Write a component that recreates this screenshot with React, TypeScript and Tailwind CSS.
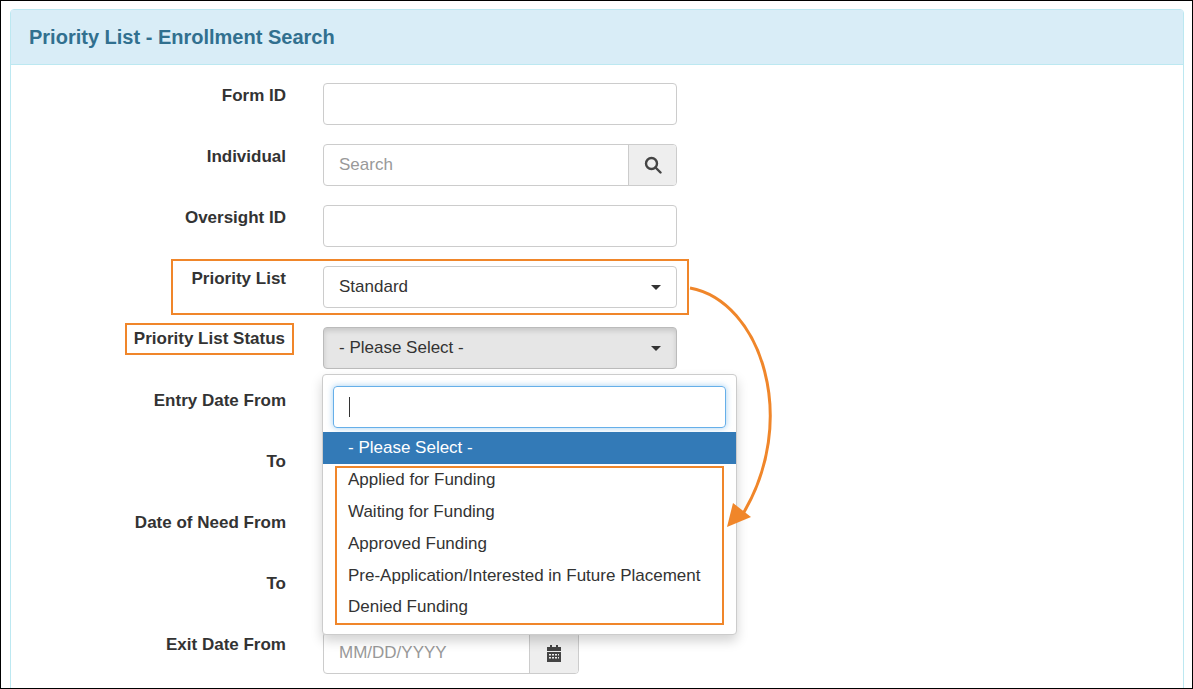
import React from "react";

const Cal = () => (
  <svg width="16" height="17" viewBox="0 0 16 17" fill="#444">
    <rect x="4" y="0" width="2" height="3" />
    <rect x="10" y="0" width="2" height="3" />
    <rect x="1" y="2" width="14" height="4" />
    <path d="M1 7h14v10H1z M3 9v1.5h2V9z M6 9v1.5h2V9z M9 9v1.5h2V9z M12 9v1.5h1V9z M3 12v1.5h2V12z M6 12v1.5h2V12z M9 12v1.5h2V12z M12 12v1.5h1V12z" fillRule="evenodd" />
  </svg>
);

const Caret = () => <span className="w-0 h-0 border-l-[5px] border-r-[5px] border-t-[5px] border-l-transparent border-r-transparent border-t-[#333]" />;

function Row({ label, children, boxed }: { label: string; children: React.ReactNode; boxed?: boolean }) {
  return (
    <div className="flex items-start h-[61px]">
      <div className="w-[275px] flex justify-end pt-[2px]">
        <span className={"text-[17px] font-bold text-[#333] leading-[22px] " + (boxed ? "border-2 border-[#f0862a] px-[7px] -mt-[6px] py-[3px] -mr-[8px]" : "")}>{label}</span>
      </div>
      <div className="ml-[37px]">{children}</div>
    </div>
  );
}

const DateInput = () => (
  <div className="flex w-[256px] h-[42px] border border-[#ccc] rounded-[4px] overflow-hidden">
    <div className="flex-1 px-[15px] flex items-center text-[17px] text-[#999]">MM/DD/YYYY</div>
    <div className="w-[49px] bg-[#eee] border-l border-[#ccc] flex items-center justify-center"><Cal /></div>
  </div>
);

export default function App() {
  return (
    <div className="w-[1193px] h-[689px] bg-white border border-black relative overflow-hidden" style={{ fontFamily: '"Liberation Sans", Arial, sans-serif' }}>
      <div className="ml-[9px] mt-[8px] w-[1174px] h-[700px] border border-[#bce8f1] rounded-[4px]">
        <div className="h-[55px] bg-[#d9edf7] border-b border-[#bce8f1] flex items-center px-[18px]">
          <span className="text-[20px] font-bold text-[#31708f]">Priority List - Enrollment Search</span>
        </div>
        <div className="pt-[18px]">
          <Row label="Form ID"><div className="w-[354px] h-[42px] border border-[#ccc] rounded-[4px]" /></Row>
          <Row label="Individual">
            <div className="flex w-[354px] h-[42px] border border-[#ccc] rounded-[4px] overflow-hidden">
              <div className="flex-1 px-[15px] flex items-center text-[17px] text-[#999]">Search</div>
              <div className="w-[48px] bg-[#eee] border-l border-[#ccc] flex items-center justify-center">
                <svg width="18" height="18" viewBox="0 0 18 18" fill="none" stroke="#444" strokeWidth="2.4"><circle cx="7.5" cy="7.5" r="5.5" /><path d="M11.5 11.5l5 5" strokeLinecap="round" /></svg>
              </div>
            </div>
          </Row>
          <Row label="Oversight ID"><div className="w-[354px] h-[42px] border border-[#ccc] rounded-[4px]" /></Row>
          <div className="relative">
            <div className="absolute left-[160px] -top-[7px] w-[518px] h-[56px] border-2 border-[#f0862a] pointer-events-none" />
            <Row label="Priority List">
              <div className="w-[354px] h-[42px] border border-[#ccc] rounded-[4px] flex items-center justify-between px-[15px] text-[17px] text-[#333]">Standard<Caret /></div>
            </Row>
          </div>
          <Row label="Priority List Status" boxed>
            <div className="w-[354px] h-[42px] border border-[#bbb] rounded-[4px] bg-[#e6e6e6] shadow-[inset_0_3px_5px_rgba(0,0,0,0.125)] flex items-center justify-between px-[15px] text-[17px] text-[#333]">- Please Select -<Caret /></div>
          </Row>
          <Row label="Entry Date From"><DateInput /></Row>
          <Row label="To"><DateInput /></Row>
          <Row label="Date of Need From"><DateInput /></Row>
          <Row label="To"><DateInput /></Row>
          <Row label="Exit Date From"><DateInput /></Row>
        </div>
      </div>

      <div className="absolute left-[321px] top-[373px] w-[415px] h-[261px] bg-white border border-[#ccc] rounded-[4px] shadow-[0_6px_12px_rgba(0,0,0,0.175)]">
        <div className="px-[10px] pt-[11px] pb-[4px]">
          <div className="h-[42px] border border-[#66afe9] rounded-[4px] shadow-[0_0_6px_rgba(102,175,233,0.6)] flex items-center pl-[15px]">
            <span className="w-px h-[20px] bg-[#333]" />
          </div>
        </div>
        <div className="h-[32px] bg-[#337ab7] text-white text-[17px] flex items-center px-[25px]">- Please Select -</div>
        <div className="mx-[12px] mt-[2px] border-2 border-[#f0862a] h-[159px] flex flex-col justify-start">
          {["Applied for Funding", "Waiting for Funding", "Approved Funding", "Pre-Application/Interested in Future Placement", "Denied Funding"].map((t, i) => (
            <div key={t} className={"h-[32.5px] flex items-center pl-[11px] text-[17px] text-[#333] whitespace-nowrap " + (i === 0 ? "-mt-[4px]" : "")}>{t}</div>
          ))}
        </div>
      </div>

      <svg className="absolute left-0 top-0 pointer-events-none" width="1193" height="689">
        <path d="M689 287 C 760 300, 800 420, 740 516" fill="none" stroke="#f0862a" strokeWidth="3" />
        <path d="M726 526 L732 502 L750 516 Z" fill="#f0862a" />
      </svg>
    </div>
  );
}
